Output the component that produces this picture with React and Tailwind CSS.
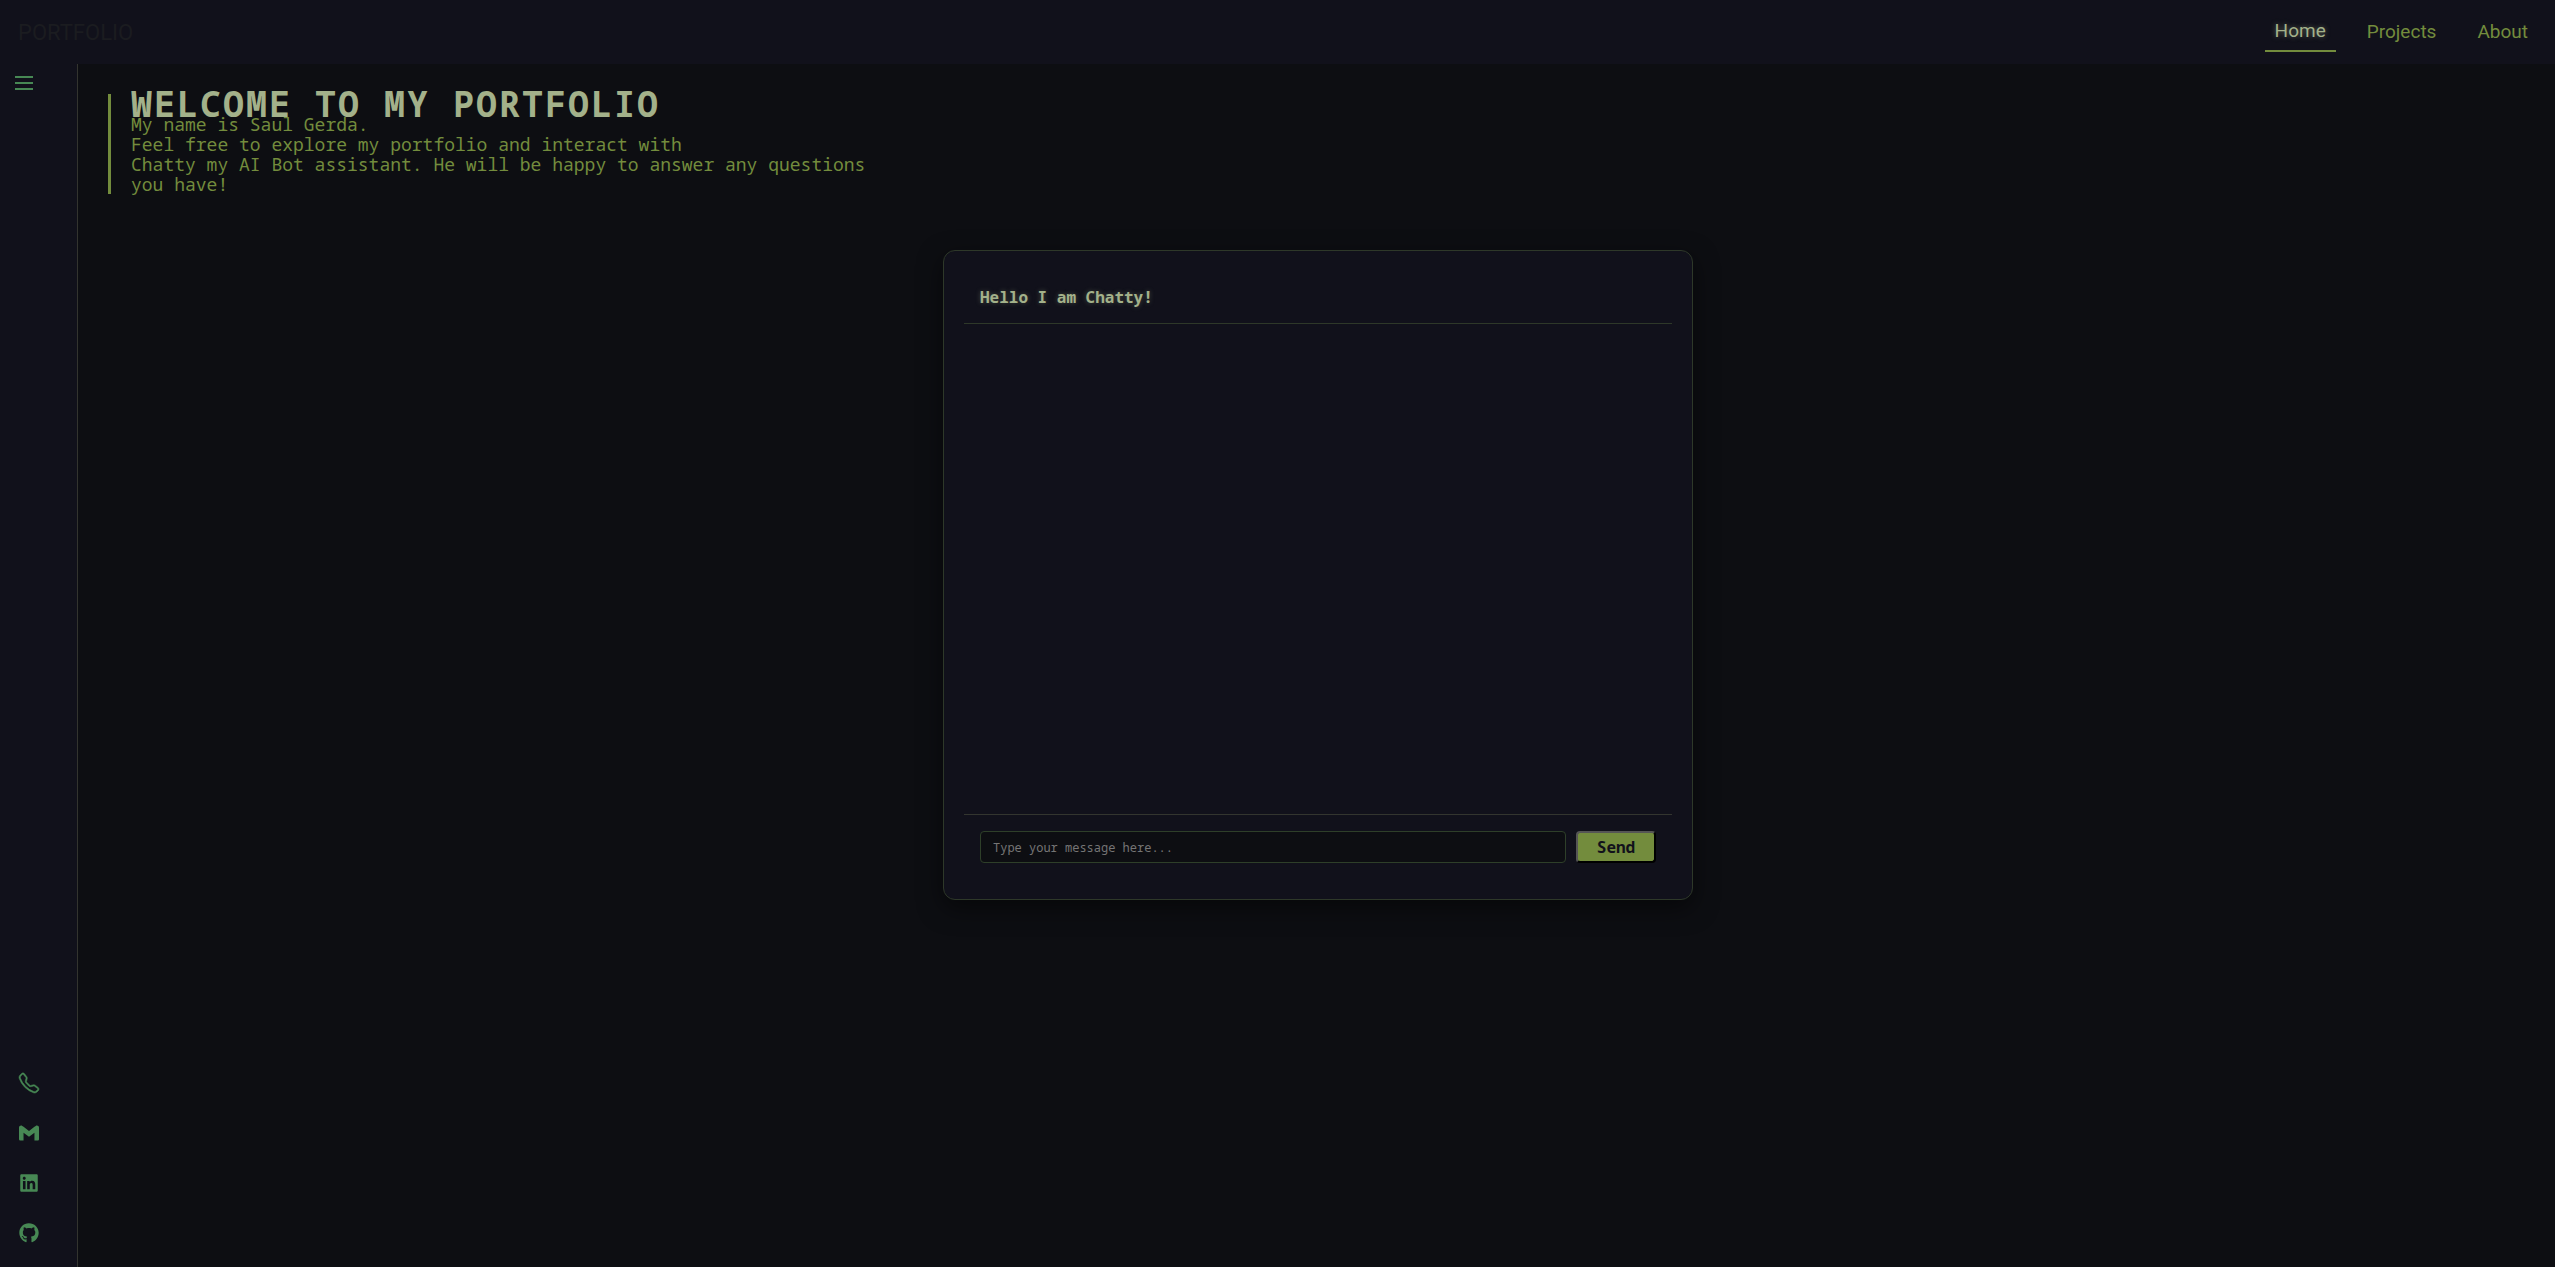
import { BsTelephone } from "react-icons/bs";
import { SiGmail } from "react-icons/si";
import { FaLinkedin, FaGithub } from "react-icons/fa";

const contacts = [
  { label: "Phone", Icon: BsTelephone, className: "overflow-visible [stroke-width:0.4]" },
  { label: "Gmail", Icon: SiGmail, className: "" },
  { label: "LinkedIn", Icon: FaLinkedin, className: "" },
  { label: "GitHub", Icon: FaGithub, className: "" },
];

function Header() {
  return (
    <header className="flex h-16 items-center justify-between bg-[#11111b] pr-[17px] pl-[18px] font-['Roboto',sans-serif]">
      <a href="#" className="text-[22px] text-[#1b1c20]">
        PORTFOLIO
      </a>
      <nav className="flex items-center gap-[21px] text-[19px] leading-5 text-[#738c3d]">
        <a
          href="#home"
          aria-current="page"
          className="border-b-2 border-[#738c3d] px-[10px] py-[9px] text-[#a3b18a] [text-shadow:0_0_5px_#a3b18a80]"
        >
          Home
        </a>
        <a href="#projects" className="px-[10px]">
          Projects
        </a>
        <a href="#about" className="px-[10px]">
          About
        </a>
      </nav>
    </header>
  );
}

function Sidebar() {
  return (
    <aside className="flex w-[78px] shrink-0 flex-col justify-between border-r border-[#33342f] bg-[#11111b] text-[#478854]">
      <button type="button" aria-label="Menu" className="mt-3 ml-[15px] w-[18px]">
        <svg viewBox="0 0 18 14" className="w-[18px]" fill="currentColor" shapeRendering="crispEdges">
          <path d="M0 0h18v2H0zM0 6h18v2H0zM0 12h18v2H0z" />
        </svg>
      </button>
      <ul className="mb-6 ml-[19px] flex flex-col gap-[30px]">
        {contacts.map(({ label, Icon, className }) => (
          <li key={label}>
            <a href="#" aria-label={label} className="block w-5">
              <Icon size={20} className={className} />
            </a>
          </li>
        ))}
      </ul>
    </aside>
  );
}

function Intro() {
  return (
    <section className="border-l-[3px] border-[#738c3d] pl-5">
      <h1 className="text-[35px] leading-5 font-bold tracking-[2px] text-[#a3b18a]">
        WELCOME TO MY PORTFOLIO
      </h1>
      <p className="text-[18px] leading-5 text-[#738c3d]">
        My name is Saul Gerda.
        <br />
        Feel free to explore my portfolio and interact with
        <br />
        Chatty my AI Bot assistant. He will be happy to answer any questions
        <br />
        you have!
      </p>
    </section>
  );
}

function Chat() {
  return (
    <section className="mx-auto mt-14 flex h-[650px] w-full max-w-[750px] flex-col rounded-xl border border-[#2e3829] bg-[#11111b] p-5 shadow-[0_8px_24px_#00000080]">
      <h2 className="border-b border-[#2e3829] p-4 text-base leading-5 font-bold text-[#a3b18a] [text-shadow:0_0_5px_#a3b18a60]">
        Hello I am Chatty!
      </h2>
      <div className="grow" />
      <form
        className="flex gap-[10px] border-t border-[#33352f] p-4"
        onSubmit={(e) => e.preventDefault()}
      >
        <input
          type="text"
          aria-label="Message"
          placeholder="Type your message here..."
          className="h-8 min-w-0 grow rounded border border-[#2e3f29] bg-[#0d0e12] px-3 text-xs text-[#a3b18a] placeholder:text-[#757575]"
        />
        <button
          type="submit"
          className="h-8 w-20 rounded border-2 border-t-[#555] border-r-black border-b-black border-l-[#555] bg-[#738c3d] text-base leading-5 font-bold text-[#11111b]"
        >
          Send
        </button>
      </form>
    </section>
  );
}

export default function App() {
  return (
    <div className="flex min-h-screen flex-col bg-[#0d0e12] font-['Noto_Sans_Mono','DejaVu_Sans_Mono',monospace]">
      <Header />
      <div className="flex grow">
        <Sidebar />
        <main className="grow pt-[30px] pr-[27px] pl-[30px]">
          <Intro />
          <Chat />
        </main>
      </div>
    </div>
  );
}
